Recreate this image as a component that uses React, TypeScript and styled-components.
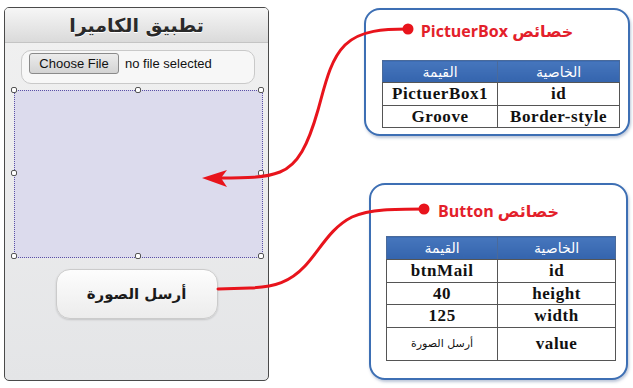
import React from 'react'
import styled, { createGlobalStyle } from 'styled-components'

const GlobalStyle = createGlobalStyle`
    body {
        margin: 0;
        background: #ffffff;
        font-family: "DejaVu Sans", "Liberation Sans", sans-serif;
    }
`

type Row = { value: React.ReactNode; prop: string; h: number; small?: boolean }

const pictureRows: Row[] = [
    { value: 'PictuerBox1', prop: 'id', h: 23 },
    { value: 'Groove', prop: 'Border-style', h: 22 },
]

const buttonRows: Row[] = [
    { value: 'btnMail', prop: 'id', h: 23 },
    { value: '40', prop: 'height', h: 22 },
    { value: '125', prop: 'width', h: 23 },
    { value: 'أرسل الصورة', prop: 'value', h: 33, small: true },
]

const handles = [
    [0, 0], [50, 0], [100, 0],
    [0, 50], [100, 50],
    [0, 100], [50, 100], [100, 100],
]

function PropsTable({ rows, width, ml, headH }: { rows: Row[]; width: number; ml: number; headH: number }) {
    return (
        <Table $w={width} $ml={ml}>
            <thead>
                <tr style={{ height: headH }}>
                    <HeadCell>الخاصية</HeadCell>
                    <HeadCell>القيمة</HeadCell>
                </tr>
            </thead>
            <tbody>
                {rows.map((r) => (
                    <tr key={r.prop} style={{ height: r.h }}>
                        <Cell>{r.prop}</Cell>
                        <Cell $small={r.small}>{r.value}</Cell>
                    </tr>
                ))}
            </tbody>
        </Table>
    )
}

function App() {
    return (
        <Canvas>
            <GlobalStyle />
            <Phone>
                <PhoneHeader>تطبيق الكاميرا</PhoneHeader>
                <PhoneBody>
                    <FileRow>
                        <ChooseButton>Choose File</ChooseButton>
                        <FileName>no file selected</FileName>
                    </FileRow>
                    <PictureBox>
                        {handles.map(([x, y], i) => (
                            <Handle key={i} style={{ left: `${x}%`, top: `${y}%` }} />
                        ))}
                    </PictureBox>
                    <SendButton>أرسل الصورة</SendButton>
                </PhoneBody>
            </Phone>

            <RightColumn>
                <Card $w={266} $h={128} $ml={0} $mt={8} $pt={11} $pb={6}>
                    <CardTitle>خصائص PictuerBox</CardTitle>
                    <TableGap $h={19} />
                    <PropsTable rows={pictureRows} width={238} ml={16} headH={22} />
                </Card>
                <Card $w={259} $h={197} $ml={5} $mt={47} $pt={16} $pb={18}>
                    <CardTitle>خصائص Button</CardTitle>
                    <TableGap $h={15} />
                    <PropsTable rows={buttonRows} width={230} ml={15} headH={23} />
                </Card>
            </RightColumn>

            <Arrows viewBox='0 0 633 388' width={633} height={388}>
                <path
                    d='M408,29 C385,29 360,30 345,45 C330,60 325,85 318,110 C308,145 298,165 280,172 C265,178 245,178 220,178'
                    fill='none' stroke='#e8141c' strokeWidth={3} strokeLinecap='round'
                />
                <polygon points='202,178 227,170 221,178 227,187' fill='#e8141c' />
                <circle cx={408} cy={29} r={5.5} fill='#e8141c' />
                <path
                    d='M424,209 C395,209 370,209 352,217 C330,228 320,250 305,266 C290,282 275,287 250,288 L218,289'
                    fill='none' stroke='#e8141c' strokeWidth={3} strokeLinecap='round'
                />
                <circle cx={424} cy={209} r={5.5} fill='#e8141c' />
            </Arrows>
        </Canvas>
    )
}

export default App

const Canvas = styled.div`
    position: relative;
    width: 633px;
    height: 388px;
    display: flex;
    align-items: flex-start;
    overflow: hidden;
`

const Phone = styled.div`
    margin: 7px 0 0 4px;
    width: 265px;
    height: 374px;
    box-sizing: border-box;
    border: 1.5px solid #4a4a4a;
    border-radius: 5px;
    overflow: hidden;
    display: flex;
    flex-direction: column;
    background: linear-gradient(#f1f1f1, #e4e5e7);
`

const PhoneHeader = styled.div`
    height: 34px;
    flex: none;
    display: flex;
    align-items: center;
    justify-content: center;
    direction: rtl;
    background: linear-gradient(#f6f6f6, #dadada);
    border-bottom: 1px solid #c4c4c4;
    font-size: 19px;
    font-weight: bold;
    color: #2a2a2a;
    text-shadow: 0 1px 0 #ffffff;
`

const PhoneBody = styled.div`
    display: flex;
    flex-direction: column;
    padding-top: 7px;
`

const FileRow = styled.div`
    margin: 0 13px 0 16px;
    height: 34px;
    box-sizing: border-box;
    border: 1px solid #c9c9c9;
    border-radius: 10px;
    background: #f7f7f7;
    display: flex;
    align-items: flex-start;
    padding: 2px 0 0 7px;
    gap: 6px;
    font-family: "Liberation Sans", Arial, sans-serif;
    font-size: 13px;
    color: #111;
`

const ChooseButton = styled.div`
    width: 90px;
    height: 21px;
    box-sizing: border-box;
    border: 1px solid #8a8a8a;
    border-radius: 3px;
    background: linear-gradient(#ececec, #d3d3d3);
    display: flex;
    align-items: center;
    justify-content: center;
`

const FileName = styled.span`
    line-height: 21px;
`

const PictureBox = styled.div`
    position: relative;
    margin: 6px 5px 0 9px;
    height: 168px;
    box-sizing: border-box;
    border: 1.5px dotted #5a50a6;
    background: #dcdbed;
`

const Handle = styled.span`
    position: absolute;
    width: 6px;
    height: 6px;
    margin: -4px 0 0 -4px;
    box-sizing: border-box;
    border: 1.5px solid #555;
    border-radius: 2px;
    background: #ffffff;
`

const SendButton = styled.div`
    align-self: center;
    margin-top: 11px;
    width: 162px;
    height: 50px;
    box-sizing: border-box;
    border: 1px solid #cbcbcb;
    border-radius: 14px;
    background: linear-gradient(#fdfdfd, #ececec);
    box-shadow: 0 1px 2px rgba(0, 0, 0, 0.15);
    display: flex;
    align-items: center;
    justify-content: center;
    direction: rtl;
    font-size: 15px;
    font-weight: bold;
    color: #1a1a1a;
`

const RightColumn = styled.div`
    margin-left: 95px;
    display: flex;
    flex-direction: column;
    align-items: flex-start;
`

const Card = styled.div<{ $w: number; $h: number; $ml: number; $mt: number; $pt: number; $pb: number }>`
    width: ${(p) => p.$w}px;
    height: ${(p) => p.$h}px;
    margin: ${(p) => p.$mt}px 0 0 ${(p) => p.$ml}px;
    padding: ${(p) => p.$pt}px 0 ${(p) => p.$pb}px;
    box-sizing: border-box;
    border: 2px solid #3d6fb4;
    border-radius: 16px;
    background: #ffffff;
    box-shadow: 1px 2px 3px rgba(60, 90, 140, 0.35);
    display: flex;
    flex-direction: column;
`

const CardTitle = styled.div`
    height: 20px;
    line-height: 20px;
    text-align: center;
    direction: rtl;
    color: #e3202a;
    font-family: "Open Sans", "DejaVu Sans", sans-serif;
    font-size: 16px;
    font-weight: bold;
`

const TableGap = styled.div<{ $h: number }>`
    height: ${(p) => p.$h}px;
    flex: none;
`

const Table = styled.table<{ $w: number; $ml: number }>`
    width: ${(p) => p.$w}px;
    margin-left: ${(p) => p.$ml}px;
    border-collapse: collapse;
    direction: rtl;
    table-layout: fixed;
    border: 1.5px solid #555;
`

const HeadCell = styled.th`
    padding: 0;
    background: linear-gradient(#4676bd, #3464ad);
    color: #ffffff;
    font-size: 14px;
    font-weight: normal;
    border: 1px solid #4a6a9a;
    border-bottom-color: #555;
    text-align: center;
    &:first-child {
        width: 51%;
    }
`

const Cell = styled.td<{ $small?: boolean }>`
    padding: 0;
    border: 1px solid #555;
    text-align: center;
    font-family: "Liberation Serif", "Times New Roman", serif;
    font-weight: bold;
    font-size: 17px;
    line-height: 18px;
    letter-spacing: 0.6px;
    color: #111;
    ${(p) => p.$small && `
        font-family: "DejaVu Sans", sans-serif;
        font-weight: normal;
        font-size: 11px;
        letter-spacing: 0;
    `}
`

const Arrows = styled.svg`
    position: absolute;
    left: 0;
    top: 0;
    pointer-events: none;
`
